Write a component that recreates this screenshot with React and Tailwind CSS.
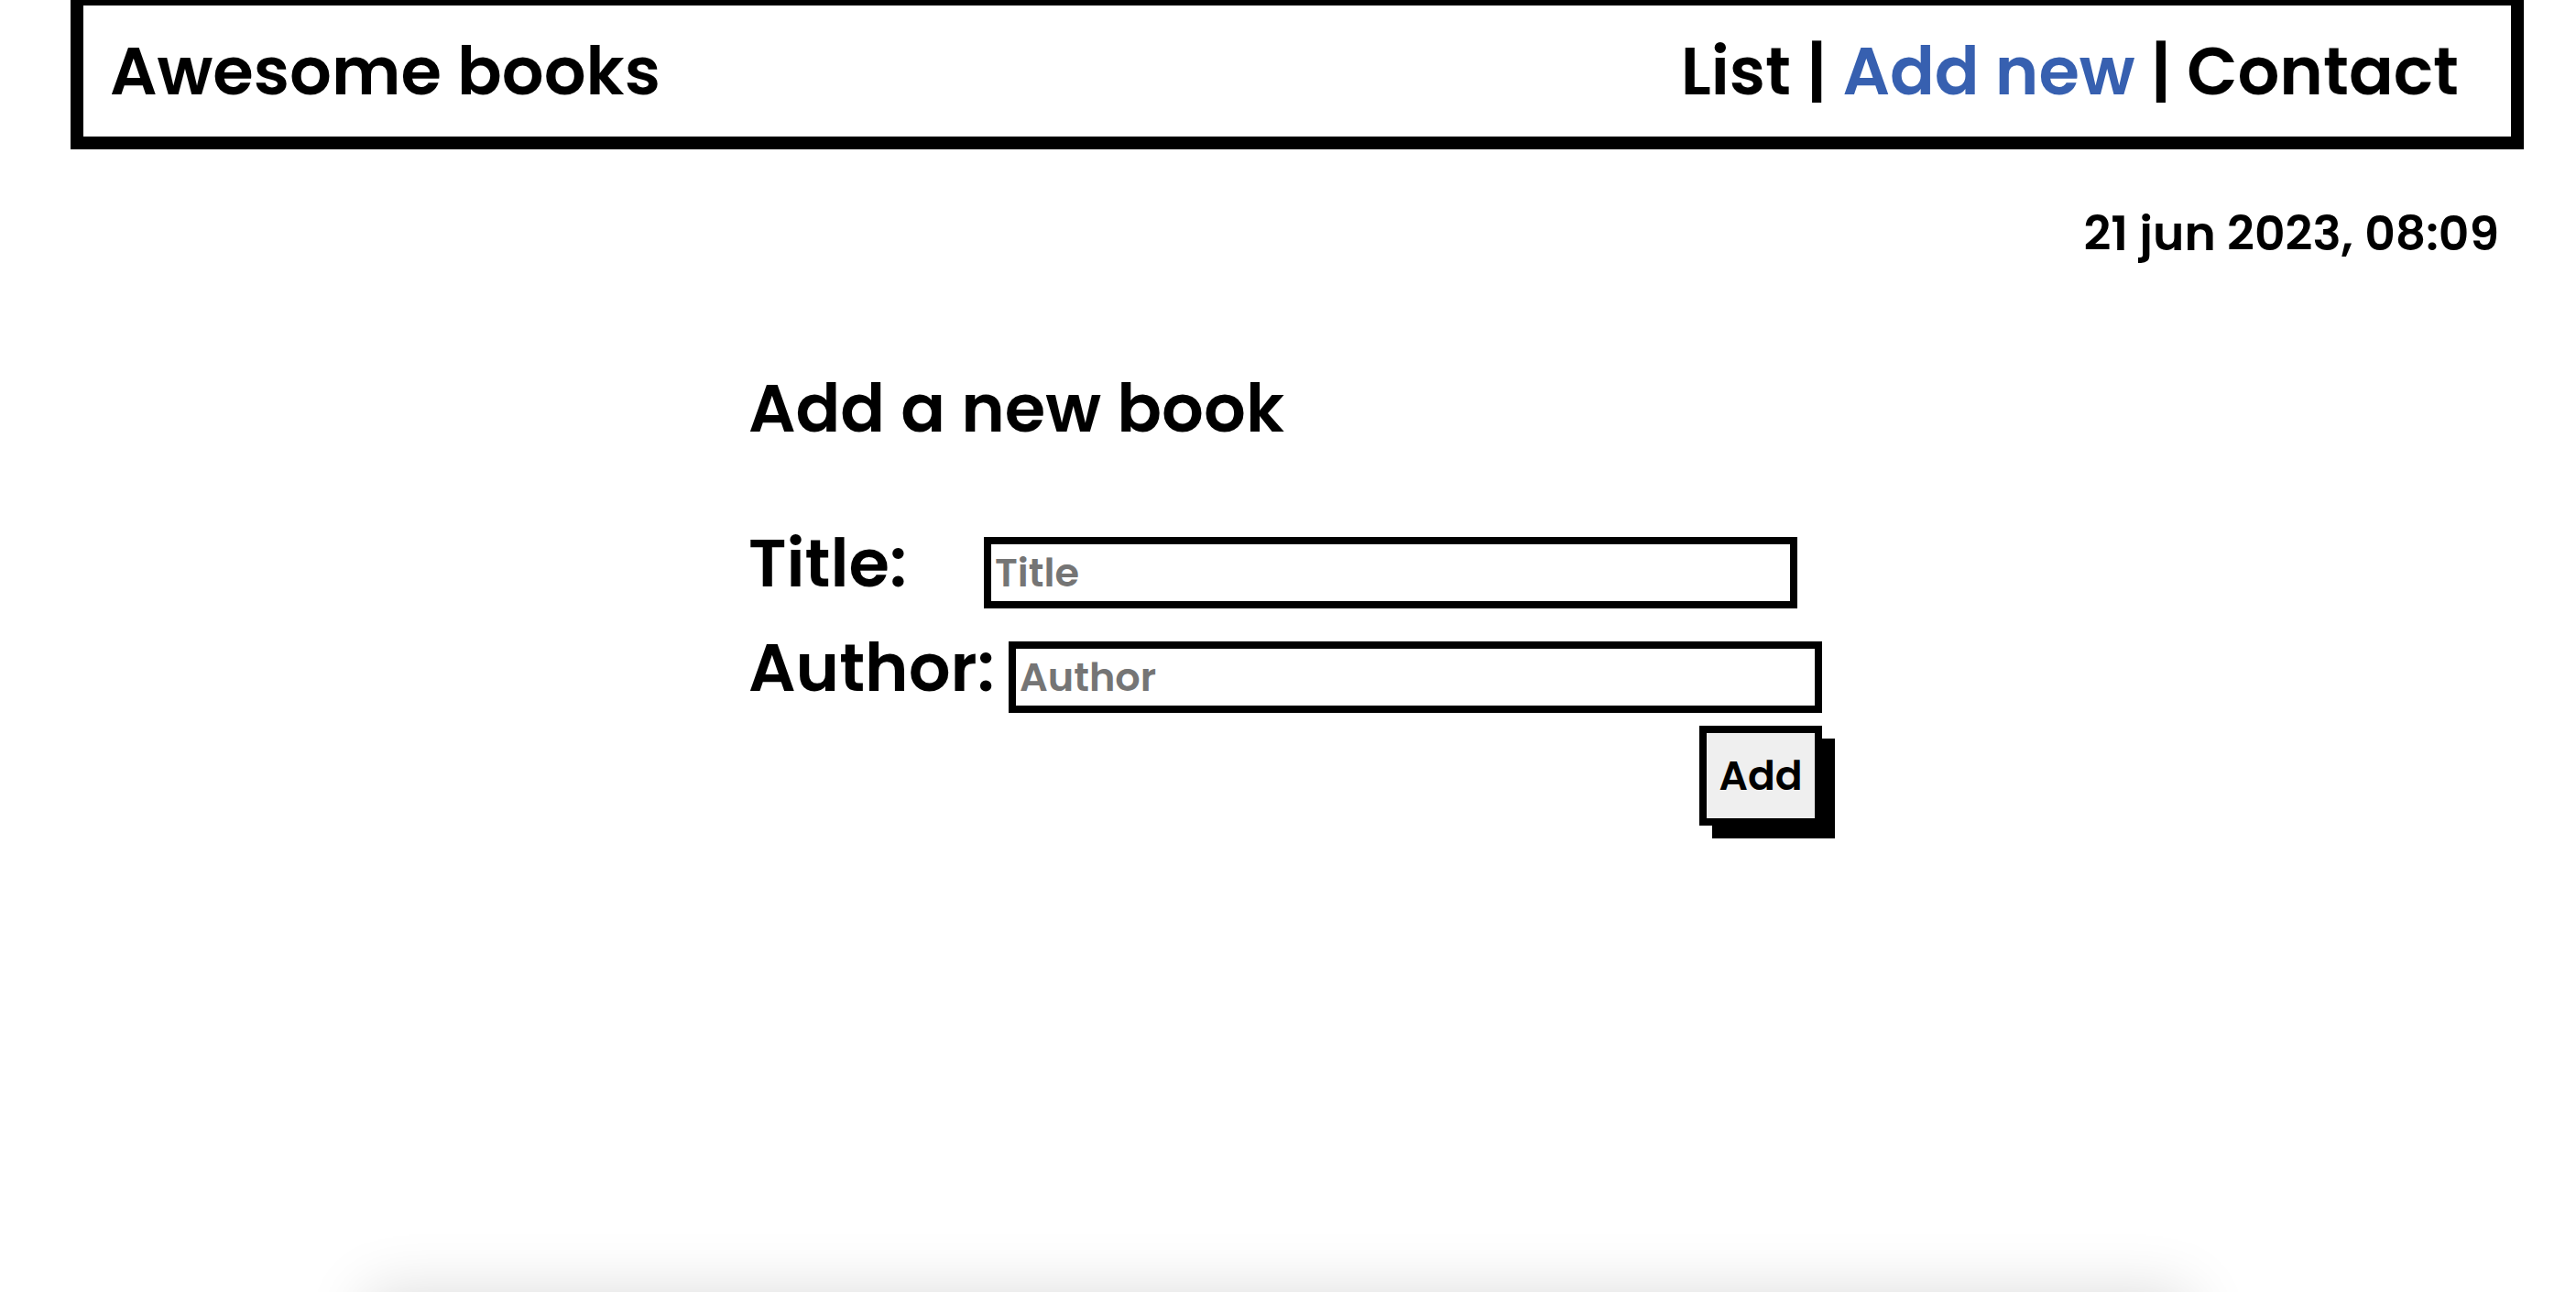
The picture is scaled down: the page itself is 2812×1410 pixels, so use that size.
export default function App() {
  const font = { fontFamily: 'Poppins, Inter, "Noto Sans", sans-serif' };
  return (
    <div className="h-[1410px] overflow-hidden bg-white text-black" style={font}>
      <div className="h-[1410px] flex flex-col">
        <header className="ml-[77px] mr-[57px] -mt-[8px] h-[171px] border-[14px] border-black flex items-center justify-between pl-[29px] pr-[57px]">
          <h1 className="text-[72px] leading-none font-semibold">Awesome books</h1>
          <nav className="flex items-center text-[72px] leading-none font-semibold whitespace-pre">
            <a className="text-black">List</a>
            <span> | </span>
            <a className="text-[#3760b0]">Add new</a>
            <span> | </span>
            <a className="text-black">Contact</a>
          </nav>
        </header>

        <div className="mt-[66px] flex justify-end pr-[84px]">
          <p className="text-[52px] leading-none font-semibold">21 jun 2023, 08:09</p>
        </div>

        <section className="pl-[817px] w-[1989px] flex flex-col">
          <h2 className="mt-[129px] text-[72px] leading-none font-semibold">Add a new book</h2>

          <div className="mt-[97px] flex items-baseline">
            <label className="w-[257px] text-[72px] leading-none font-semibold">Title:</label>
            <input
              placeholder="Title"
              className="w-[888px] h-[78px] border-[8px] border-black px-[4px] text-[43px] font-semibold placeholder:text-[#757575] outline-none"
            />
          </div>

          <div className="mt-[29px] flex items-baseline">
            <label className="w-[284px] text-[72px] leading-none font-semibold">Author:</label>
            <input
              placeholder="Author"
              className="w-[888px] h-[78px] border-[8px] border-black px-[4px] text-[43px] font-semibold placeholder:text-[#757575] outline-none"
            />
          </div>

          <button className="mt-[14px] self-end w-[134px] h-[109px] border-[8px] border-black bg-[#efefef] text-[44px] font-semibold shadow-[14px_14px_0_#000]">
            Add
          </button>
        </section>
      </div>
      <footer className="ml-[400px] w-[1990px] h-[200px] bg-white shadow-[0_0_64px_rgba(0,0,0,0.14)]" />
    </div>
  );
}
